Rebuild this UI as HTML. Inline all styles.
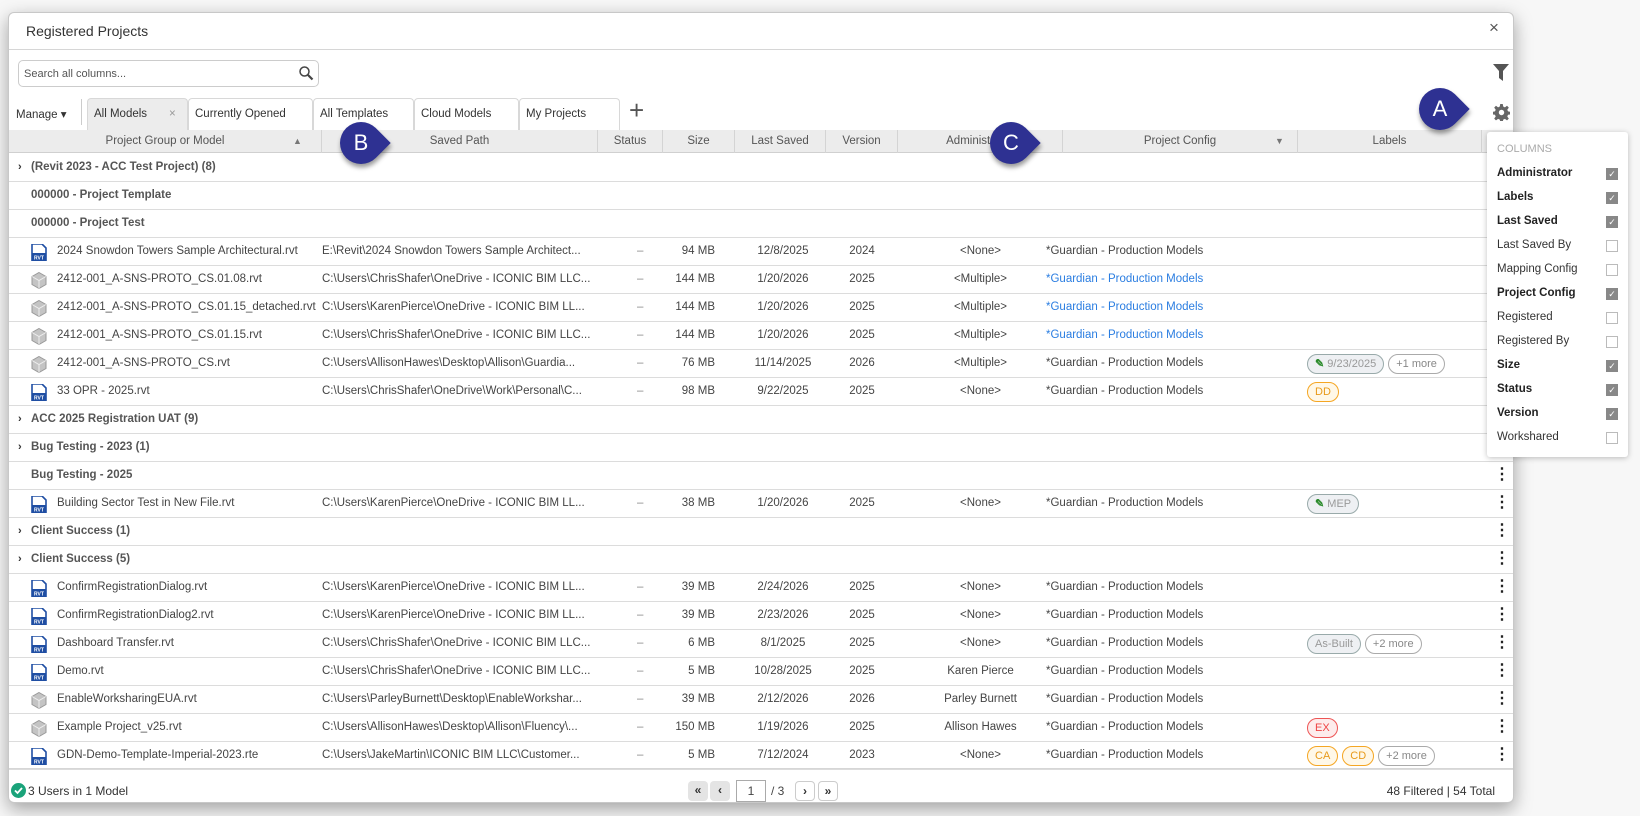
<!DOCTYPE html>
<html><head><meta charset="utf-8">
<style>
*{box-sizing:border-box;margin:0;padding:0}
body{width:1640px;height:816px;overflow:hidden;background:#f7f7f7;font-family:"Liberation Sans",sans-serif;font-size:11.5px;color:#444;position:relative}
.dlg{position:absolute;left:8px;top:12px;width:1506px;height:791px;background:#fff;border:1px solid #c8c8c8;border-radius:6px;box-shadow:0 6px 18px rgba(0,0,0,.35);overflow:hidden}
.a{position:absolute}
.title{left:17px;top:10px;font-size:14px;color:#333}
.hl{position:absolute;left:0;right:0;height:1px;background:#d6d6d6}
.search{left:9px;top:47px;width:301px;height:27px;border:1px solid #ccc;border-radius:5px;padding:7px 5px;color:#555;font-size:11px}
.tab{position:absolute;top:85px;height:32px;border:1px solid #d8d8d8;border-bottom:none;border-radius:4px 4px 0 0;padding:9px 6px;font-size:11.5px;color:#333;background:#fff}
.hdr{position:absolute;left:0;top:117px;width:1506px;height:23px;background:#ececec;border-bottom:1px solid #d0d0d0}
.hc{position:absolute;top:0;height:23px;line-height:23px;text-align:center;color:#555;border-right:1px solid #d4d4d4;font-size:11.5px}
.row{position:absolute;left:0;width:1506px;height:28px;border-bottom:1px solid #dcdcdc;line-height:27px}
.row span{position:absolute;white-space:nowrap}
.g{font-weight:bold;color:#555;left:22px}
.chev{left:9px;font-weight:bold;font-size:11px;color:#333}
.nm{left:48px}
.pt{left:313px}
.st{left:628px;color:#888}
.sz{left:654px;width:52px;text-align:right}
.ls{left:728px;width:92px;text-align:center}
.vr{left:817px;width:72px;text-align:center}
.ad{left:889px;width:165px;text-align:center}
.pc{left:1037px}
.blue{color:#2a7de1}
.dots{left:1485px;width:12px;text-align:center;font-weight:bold;color:#222;font-size:16px;line-height:26px}
.chips{position:absolute;left:1298px;top:4px;display:flex;gap:4px}
.chip{height:20px;line-height:18px;border:1px solid #aaa;border-radius:10px;padding:0 7px;font-size:11px;color:#888;background:#fff;white-space:nowrap}
.ic{left:22px;top:6px}
.pop{position:absolute;left:1487px;top:132px;width:141px;height:325px;background:#fff;border-radius:3px;box-shadow:0 1px 6px rgba(0,0,0,.25)}
.pi{position:absolute;left:10px;font-size:11.5px;color:#333}
.cb{position:absolute;left:119px;width:12px;height:12px;border:1px solid #bbb;background:#fff}
.cb.on{background:#888;border-color:#888;color:#fff;font-size:9px;line-height:11px;text-align:center}
.call{position:absolute;width:42px;height:42px}
.call:before{content:"";position:absolute;left:0;top:0;width:42px;height:42px;background:#2e3192;border-radius:50% 0 50% 50%;transform:rotate(45deg);box-shadow:3px 2px 5px rgba(0,0,0,.4)}
.call b{position:absolute;left:0;top:0;width:42px;line-height:42px;text-align:center;color:#fff;font-size:22px;font-weight:normal}
.pg{position:absolute;top:768px;height:20px;width:20px;border-radius:4px;text-align:center;line-height:19px;font-size:12px;font-weight:bold;color:#333}
</style></head><body>
<div class="dlg">
 <div class="a title">Registered Projects</div>
 <div class="a" style="left:1480px;top:5px;font-size:17px;color:#555">×</div>
 <div class="hl" style="top:36px"></div>
 <div class="a search">Search all columns...
  <svg class="a" style="right:4px;top:4px" width="16" height="16" viewBox="0 0 16 16"><circle cx="6.5" cy="6.5" r="4.5" fill="none" stroke="#444" stroke-width="1.5"/><path d="M10 10l4.5 4.5" stroke="#444" stroke-width="2.2"/></svg></div>
 <svg class="a" style="left:1484px;top:51px" width="16" height="17" viewBox="0 0 16 17"><path d="M0 0h16l-6 7v10l-4-3V7z" fill="#555"/></svg>
 <svg class="a" style="left:1484px;top:91px" width="17" height="17" viewBox="0 0 20 20"><path fill="#666" d="M8.5 0h3l.5 3 2 .9 2.5-1.8 2.1 2.1-1.8 2.5.9 2 3 .5v3l-3 .5-.9 2 1.8 2.5-2.1 2.1-2.5-1.8-2 .9-.5 3h-3l-.5-3-2-.9-2.5 1.8-2.1-2.1 1.8-2.5-.9-2-3-.5v-3l3-.5.9-2-1.8-2.5 2.1-2.1 2.5 1.8 2-.9z"/><circle cx="10" cy="10" r="3.2" fill="#fff"/></svg>
 <div class="a" style="left:7px;top:94px;font-size:11.5px;color:#333">Manage ▾</div>
 <div class="a" style="left:72px;top:86px;width:1px;height:26px;background:#ccc"></div>
 <div class="tab" style="left:78px;width:101px;background:#ececec">All Models <span style="position:absolute;left:81px;color:#999">×</span></div>
 <div class="tab" style="left:179px;width:125px">Currently Opened</div>
 <div class="tab" style="left:304px;width:101px">All Templates</div>
 <div class="tab" style="left:405px;width:105px">Cloud Models</div>
 <div class="tab" style="left:510px;width:101px">My Projects</div>
 <div class="a" style="left:620px;top:82px;font-size:26px;color:#555;font-weight:300">+</div>
 <div class="hdr">
  <div class="hc" style="left:0;width:313px">Project Group or Model<span style="position:absolute;left:284px;font-size:9px;color:#777">▲</span></div>
  <div class="hc" style="left:313px;width:276px">Saved Path</div>
  <div class="hc" style="left:589px;width:65px">Status</div>
  <div class="hc" style="left:654px;width:72px">Size</div>
  <div class="hc" style="left:726px;width:91px">Last Saved</div>
  <div class="hc" style="left:817px;width:72px">Version</div>
  <div class="hc" style="left:889px;width:165px">Administrator</div>
  <div class="hc" style="left:1054px;width:235px">Project Config<span style="position:absolute;left:212px;font-size:9px;color:#777">▼</span></div>
  <div class="hc" style="left:1289px;width:184px">Labels</div>
 </div>
 <div id="rows"></div>
 <div class="hl" style="top:755px"></div>
 <svg class="a" style="left:2px;top:770px" width="15" height="15"><circle cx="7.5" cy="7.5" r="7.5" fill="#1aa37a"/><path d="M4 7.5l2.5 2.5 4.5-5" stroke="#fff" stroke-width="1.8" fill="none"/></svg>
 <div class="a" style="left:19px;top:771px;font-size:12px;color:#333">3 Users in 1 Model</div>
 <div class="pg" style="left:679px;background:#e4e4e4">«</div>
 <div class="pg" style="left:701px;background:#e4e4e4">‹</div>
 <div class="a" style="left:727px;top:767px;width:30px;height:22px;border:1px solid #aaa;text-align:center;line-height:20px;font-size:12px">1</div>
 <div class="a" style="left:762px;top:771px;font-size:12px">/ 3</div>
 <div class="pg" style="left:786px;border:1px solid #ccc">›</div>
 <div class="pg" style="left:809px;border:1px solid #ccc">»</div>
 <div class="a" style="right:18px;top:771px;font-size:12px;color:#333">48 Filtered | 54 Total</div>
</div>
<div class="pop">
 <div class="pi" style="top:11px;color:#aaa;font-size:11px">COLUMNS</div>
</div>
<div class="call" style="left:1419px;top:88px"><b>A</b></div>
<div class="call" style="left:340px;top:122px"><b>B</b></div>
<div class="call" style="left:990px;top:122px"><b>C</b></div>
<script>
const rvt='<svg class="a ic" width="16" height="17" viewBox="0 0 16 17"><path d="M1 0h10l4 4v13H1z" fill="#fff" stroke="#1f4ea3" stroke-width="1.6"/><rect x="1" y="9" width="14" height="8" fill="#1f4ea3"/><text x="8" y="15.5" font-size="5" fill="#fff" text-anchor="middle" font-family="Liberation Sans" font-weight="bold">RVT</text></svg>';
const cube='<svg class="a ic" width="16" height="17" viewBox="0 0 16 17"><path d="M8 .5l7 4v8l-7 4-7-4v-8z" fill="#c4c4c4" stroke="#999"/><path d="M1 4.5l7 4 7-4M8 8.5v8" stroke="#eee" fill="none"/></svg>';
const G=(t,c)=>({g:t,c});
const R=(ic,n,p,s,d,v,a,pc,bl,lab)=>({ic,n,p,s,d,v,a,pc,bl,lab});
const gp='*Guardian - Production Models';
const data=[G('(Revit 2023 - ACC Test Project) (8)',1),G('000000 - Project Template'),G('000000 - Project Test'),
R(rvt,'2024 Snowdon Towers Sample Architectural.rvt','E:\\Revit\\2024 Snowdon Towers Sample Architect...','94 MB','12/8/2025','2024','&lt;None&gt;',gp),
R(cube,'2412-001_A-SNS-PROTO_CS.01.08.rvt','C:\\Users\\ChrisShafer\\OneDrive - ICONIC BIM LLC...','144 MB','1/20/2026','2025','&lt;Multiple&gt;',gp,1),
R(cube,'2412-001_A-SNS-PROTO_CS.01.15_detached.rvt','C:\\Users\\KarenPierce\\OneDrive - ICONIC BIM LL...','144 MB','1/20/2026','2025','&lt;Multiple&gt;',gp,1),
R(cube,'2412-001_A-SNS-PROTO_CS.01.15.rvt','C:\\Users\\ChrisShafer\\OneDrive - ICONIC BIM LLC...','144 MB','1/20/2026','2025','&lt;Multiple&gt;',gp,1),
R(cube,'2412-001_A-SNS-PROTO_CS.rvt','C:\\Users\\AllisonHawes\\Desktop\\Allison\\Guardia...','76 MB','11/14/2025','2026','&lt;Multiple&gt;',gp,0,[['🔗 9/23/2025','g'],['+1 more','m']]),
R(rvt,'33 OPR - 2025.rvt','C:\\Users\\ChrisShafer\\OneDrive\\Work\\Personal\\C...','98 MB','9/22/2025','2025','&lt;None&gt;',gp,0,[['DD','o']]),
G('ACC 2025 Registration UAT (9)',1),G('Bug Testing - 2023 (1)',1),G('Bug Testing - 2025'),
R(rvt,'Building Sector Test in New File.rvt','C:\\Users\\KarenPierce\\OneDrive - ICONIC BIM LL...','38 MB','1/20/2026','2025','&lt;None&gt;',gp,0,[['🔗 MEP','g']]),
G('Client Success (1)',1),G('Client Success (5)',1),
R(rvt,'ConfirmRegistrationDialog.rvt','C:\\Users\\KarenPierce\\OneDrive - ICONIC BIM LL...','39 MB','2/24/2026','2025','&lt;None&gt;',gp),
R(rvt,'ConfirmRegistrationDialog2.rvt','C:\\Users\\KarenPierce\\OneDrive - ICONIC BIM LL...','39 MB','2/23/2026','2025','&lt;None&gt;',gp),
R(rvt,'Dashboard Transfer.rvt','C:\\Users\\ChrisShafer\\OneDrive - ICONIC BIM LLC...','6 MB','8/1/2025','2025','&lt;None&gt;',gp,0,[['As-Built','g'],['+2 more','m']]),
R(rvt,'Demo.rvt','C:\\Users\\ChrisShafer\\OneDrive - ICONIC BIM LLC...','5 MB','10/28/2025','2025','Karen Pierce',gp),
R(cube,'EnableWorksharingEUA.rvt','C:\\Users\\ParleyBurnett\\Desktop\\EnableWorkshar...','39 MB','2/12/2026','2026','Parley Burnett',gp),
R(cube,'Example Project_v25.rvt','C:\\Users\\AllisonHawes\\Desktop\\Allison\\Fluency\\...','150 MB','1/19/2026','2025','Allison Hawes',gp,0,[['EX','r']]),
R(rvt,'GDN-Demo-Template-Imperial-2023.rte','C:\\Users\\JakeMartin\\ICONIC BIM LLC\\Customer...','5 MB','7/12/2024','2023','&lt;None&gt;',gp,0,[['CA','o'],['CD','o'],['+2 more','m']])];
const sty={g:'border-color:#9aa;background:#eef0f3;color:#999',m:'border-color:#aaa;color:#888',o:'border-color:#f5a623;background:#fff8e8;color:#e89a1a',r:'border-color:#e55;background:#fdecec;color:#e44'};
let h='';
data.forEach((d,i)=>{
 const top=141+i*28;
 h+=`<div class="row" style="top:${top}px">`;
 if(d.g){h+=(d.c?'<span class="chev">›</span>':'')+`<span class="g">${d.g}</span>`;}
 else{
  h+=d.ic+`<span class="nm">${d.n}</span><span class="pt">${d.p}</span><span class="st">–</span><span class="sz">${d.s}</span><span class="ls">${d.d}</span><span class="vr">${d.v}</span><span class="ad">${d.a}</span><span class="pc${d.bl?' blue':''}">${d.pc}</span>`;
  if(d.lab){h+='<div class="chips">';d.lab.forEach(l=>{h+=`<div class="chip" style="${sty[l[1]]}">${l[0].replace('🔗','<b style="color:#2a8a2a">✎</b>')}</div>`;});h+='</div>';}
 }
 h+='<span class="dots">⋮</span></div>';
});
document.getElementById('rows').outerHTML=h;
const items=[['Administrator',1],['Labels',1],['Last Saved',1],['Last Saved By',0],['Mapping Config',0],['Project Config',1],['Registered',0],['Registered By',0],['Size',1],['Status',1],['Version',1],['Workshared',0]];
let p='';
items.forEach((it,i)=>{const y=35+i*24;p+=`<div class="pi" style="top:${y}px;${it[1]?'font-weight:bold;color:#222':''}">${it[0]}</div><div class="cb${it[1]?' on':''}" style="top:${y+1}px">${it[1]?'✓':''}</div>`;});
document.querySelector('.pop').insertAdjacentHTML('beforeend',p);
</script>
</body></html>
